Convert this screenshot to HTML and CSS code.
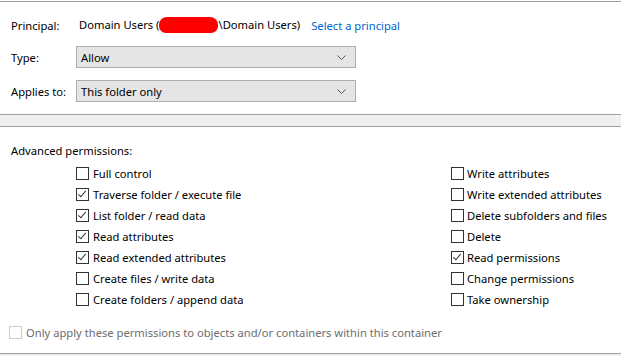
FILE: index.html
```html
<!DOCTYPE html>
<html>
  <head>
    <meta charset="UTF-8">
    <title>Permission Entry</title>
    <link rel="stylesheet" href="styles.css">
  </head>
  <body>
    <div class="rule top-rule"></div>

    <div class="fields">
      <div class="row principal">
        <span class="label">Principal:</span>
        <span class="value">Domain Users (<span class="redact"></span>\Domain Users)</span>
        <a class="link" href="#">Select a principal</a>
      </div>
      <div class="row">
        <span class="label">Type:</span>
        <div class="select">
          <span>Allow</span>
          <svg class="chevron" width="9" height="5" viewBox="0 0 9 5"><path d="M0.5 0.5 L4.5 4.5 L8.5 0.5" fill="none" stroke="#555" stroke-width="1"/></svg>
        </div>
      </div>
      <div class="row">
        <span class="label">Applies to:</span>
        <div class="select">
          <span>This folder only</span>
          <svg class="chevron" width="9" height="5" viewBox="0 0 9 5"><path d="M0.5 0.5 L4.5 4.5 L8.5 0.5" fill="none" stroke="#555" stroke-width="1"/></svg>
        </div>
      </div>
    </div>

    <div class="band"></div>

    <div class="perms">
      <div class="perms-title">Advanced permissions:</div>
      <div class="perm-cols">
        <ul class="col col-left">
          <li><span class="box"></span>Full control</li>
          <li><span class="box checked"></span>Traverse folder / execute file</li>
          <li><span class="box checked"></span>List folder / read data</li>
          <li><span class="box checked"></span>Read attributes</li>
          <li><span class="box checked"></span>Read extended attributes</li>
          <li><span class="box"></span>Create files / write data</li>
          <li><span class="box"></span>Create folders / append data</li>
        </ul>
        <ul class="col col-right">
          <li><span class="box"></span>Write attributes</li>
          <li><span class="box"></span>Write extended attributes</li>
          <li><span class="box"></span>Delete subfolders and files</li>
          <li><span class="box"></span>Delete</li>
          <li><span class="box checked"></span>Read permissions</li>
          <li><span class="box"></span>Change permissions</li>
          <li><span class="box"></span>Take ownership</li>
        </ul>
      </div>
    </div>

    <div class="only-apply">
      <span class="box disabled"></span>Only apply these permissions to objects and/or containers within this container
    </div>

    <div class="rule bottom-rule"></div>
    <div class="footer-fill"></div>
  </body>
</html>
```

FILE: styles.css
```css
body {
  font-family: 'Noto Sans', 'Open Sans', sans-serif;
  font-size: 11.2px;
  color: #000;
  margin: 0;
  padding: 0;
  background-color: #fff;
  width: 621px;
  height: 356px;
  overflow: hidden;
}
.rule {
  height: 1px;
  background-color: #a0a0a0;
}
.top-rule {
  margin-top: 1px;
}
.fields {
  padding-left: 11px;
  padding-top: 13px;
}
.row {
  display: flex;
  align-items: center;
  margin-bottom: 12px;
}
.label {
  width: 65px;
}
.principal {
  height: 20px;
  margin-bottom: 11px;
}
.principal .value {
  margin-left: 3px;
}
.redact {
  display: inline-block;
  width: 59px;
  height: 16px;
  background-color: #f00;
  border-radius: 8px 8px 7px 7px;
  vertical-align: -4px;
}
.link {
  color: #0066cc;
  text-decoration: none;
  margin-left: 11px;
}
.select {
  box-sizing: border-box;
  width: 280px;
  height: 22px;
  border: 1px solid #adadad;
  background-color: #e5e5e5;
  display: flex;
  align-items: center;
  justify-content: space-between;
  padding: 0 9px 0 4px;
}
.chevron {
  display: block;
}
.band {
  height: 11px;
  border-top: 1px solid #a0a0a0;
  border-bottom: 1px solid #a0a0a0;
  background-color: #f0f0f0;
}
.perms {
  padding-left: 11px;
  padding-top: 14px;
}
.perms-title {
  height: 20px;
  line-height: 20px;
}
.perm-cols {
  display: flex;
  padding-top: 2px;
}
.col {
  list-style: none;
  margin: 0;
  padding: 0;
}
.col-left {
  margin-left: 65px;
  width: 376px;
}
.col li {
  height: 21px;
  display: flex;
  align-items: center;
}
.box {
  width: 11px;
  height: 11px;
  border: 1px solid #333;
  background-color: #fff;
  margin-right: 4px;
  flex-shrink: 0;
  position: relative;
}
.box.checked::after {
  content: '';
  position: absolute;
  left: 3px;
  top: 0px;
  width: 3px;
  height: 7px;
  border-right: 1px solid #333;
  border-bottom: 1px solid #333;
  transform: rotate(40deg);
}
.col-right .box {
  margin-left: -1px;
  margin-right: 3px;
}
.box.disabled {
  border-color: #ccc;
}
.only-apply {
  display: flex;
  align-items: center;
  height: 20px;
  margin-top: 12px;
  padding-left: 9px;
  color: #6d6d6d;
}
.bottom-rule {
  margin-top: 11px;
}
.footer-fill {
  height: 10px;
  background-color: #f0f0f0;
}
```
